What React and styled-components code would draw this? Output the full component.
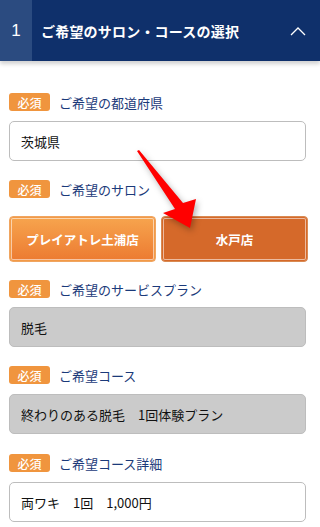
import React from 'react'
import styled, { createGlobalStyle } from 'styled-components'

const GlobalStyle = createGlobalStyle`
  * { box-sizing: border-box; }
  body {
    margin: 0;
    background: #fff;
    font-family: "Noto Sans CJK JP", "Noto Sans", sans-serif;
  }
`

const Page = styled.div`
  position: relative;
  width: 320px;
  height: 527px;
  overflow: hidden;
  background: #fff;
`

const Header = styled.div`
  display: flex;
  align-items: stretch;
  height: 61px;
  background: #0f306b;
  color: #fff;
  box-shadow: 0 3px 4px rgba(0, 0, 0, 0.18);
`

const StepNo = styled.div`
  width: 32px;
  display: flex;
  align-items: center;
  justify-content: center;
  background: #2b4b80;
  font-family: "Liberation Sans", sans-serif;
  font-size: 17px;
`

const Title = styled.div`
  flex: 1;
  display: flex;
  align-items: center;
  padding-left: 9px;
  font-size: 14px;
  font-weight: bold;
  letter-spacing: 0.2px;
`

const Toggle = styled.div`
  width: 40px;
  display: flex;
  align-items: center;
  justify-content: center;
  padding-right: 4px;
`

const Body = styled.div`
  padding: 32px 14px 0 9px;
`

const Field = styled.div`
  margin-bottom: ${p => p.$gap || 20}px;
`

const LabelRow = styled.div`
  display: flex;
  align-items: center;
  height: 18px;
  margin-bottom: ${p => p.$below || 10}px;
`

const Badge = styled.span`
  display: inline-flex;
  align-items: center;
  justify-content: center;
  width: 41px;
  height: 18px;
  border-radius: 3px;
  background: #f0953e;
  color: #fff;
  font-size: 12px;
  font-weight: 500;
  margin-right: 9px;
`

const LabelText = styled.span`
  color: #1b3a7a;
  font-size: 13px;
`

const Box = styled.div`
  height: 40px;
  display: flex;
  align-items: center;
  padding-left: 11px;
  border: 1px solid #bdbdbd;
  border-radius: 5px;
  background: ${p => (p.$disabled ? '#cbcbcb' : '#fff')};
  color: #111;
  font-size: 13px;
  white-space: pre;
`

const ButtonRow = styled.div`
  display: flex;
  gap: 5px;
  margin-right: -2px;
`

const SalonButton = styled.div`
  flex: 1;
  height: 46px;
  display: flex;
  align-items: center;
  justify-content: center;
  border-radius: 4px;
  border: 1px solid ${p => (p.$active ? '#d98a52' : '#f0a560')};
  background: ${p =>
    p.$active ? '#d5692a' : 'linear-gradient(#f7a54e, #ec7a31)'};
  box-shadow: inset 0 0 0 1px ${p => (p.$active ? '#d5692a' : '#f29a48')},
    inset 0 0 0 2px rgba(255, 255, 255, 0.55);
  color: #fff;
  font-size: 12.5px;
  font-weight: bold;
`

const Arrow = styled.svg`
  position: absolute;
  left: 0;
  top: 0;
  pointer-events: none;
  filter: drop-shadow(2px 3px 3px rgba(0, 0, 0, 0.3));
`

export default function App() {
  return (
    <Page>
      <GlobalStyle />
      <Header>
        <StepNo>1</StepNo>
        <Title>ご希望のサロン・コースの選択</Title>
        <Toggle>
          <svg width="16" height="10" viewBox="0 0 16 10">
            <path d="M1 9 L8 2 L15 9" fill="none" stroke="#fff" strokeWidth="1.3" />
          </svg>
        </Toggle>
      </Header>

      <Body>
        <Field $gap={19}>
          <LabelRow>
            <Badge>必須</Badge>
            <LabelText>ご希望の都道府県</LabelText>
          </LabelRow>
          <Box>茨城県</Box>
        </Field>

        <Field $gap={18}>
          <LabelRow $below={18}>
            <Badge>必須</Badge>
            <LabelText>ご希望のサロン</LabelText>
          </LabelRow>
          <ButtonRow>
            <SalonButton>プレイアトレ土浦店</SalonButton>
            <SalonButton $active>水戸店</SalonButton>
          </ButtonRow>
        </Field>

        <Field $gap={19}>
          <LabelRow $below={9}>
            <Badge>必須</Badge>
            <LabelText>ご希望のサービスプラン</LabelText>
          </LabelRow>
          <Box $disabled>脱毛</Box>
        </Field>

        <Field>
          <LabelRow>
            <Badge>必須</Badge>
            <LabelText>ご希望コース</LabelText>
          </LabelRow>
          <Box $disabled>終わりのある脱毛　1回体験プラン</Box>
        </Field>

        <Field>
          <LabelRow>
            <Badge>必須</Badge>
            <LabelText>ご希望コース詳細</LabelText>
          </LabelRow>
          <Box>両ワキ　1回　1,000円</Box>
        </Field>
      </Body>

      <Arrow width="320" height="527" viewBox="0 0 320 527">
        <polygon
          points="137,151 139,150 183,203 196,199 190,228 163,213 175,209"
          fill="#ff0000"
        />
      </Arrow>
    </Page>
  )
}
